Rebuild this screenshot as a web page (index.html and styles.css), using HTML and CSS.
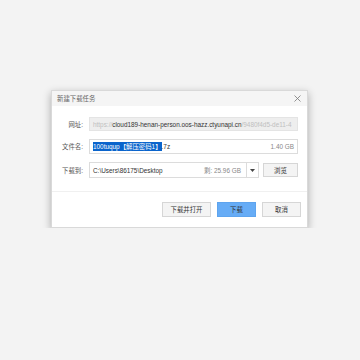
FILE: index.html
```html
<!DOCTYPE html>
<html lang="zh-CN">
<head>
    <meta charset="UTF-8">
    <meta name="viewport" content="width=device-width, initial-scale=1.0">
    <title>新建下载任务</title>
    <link rel="stylesheet" href="styles.css">
</head>
<body>
    <div class="dialog">
        <div class="title">
            <span>新建下载任务</span>
            <svg class="close" width="7" height="7" viewBox="0 0 7 7"><path d="M0.5 0.5L6.5 6.5M6.5 0.5L0.5 6.5" stroke="#777" stroke-width="0.8" fill="none"/></svg>
        </div>
        <div class="body">
            <div class="row">
                <label>网址:</label>
                <div class="field url">
                    <span class="dim">https://</span><span class="host">cloud189-henan-person.oos-hazz.ctyunapi.cn</span><span class="dim">/9480f4d5-de11-4</span>
                </div>
            </div>
            <div class="row">
                <label>文件名:</label>
                <div class="field name">
                    <span class="sel">100tuqup【解压密码1】</span><span>.7z</span>
                    <span class="size">1.40 GB</span>
                </div>
            </div>
            <div class="row">
                <label>下载到:</label>
                <div class="field path">
                    <span class="dir">C:\Users\86175\Desktop</span>
                    <span class="size">剩: 25.96 GB</span>
                    <span class="drop"><svg width="5" height="3" viewBox="0 0 5 3"><path d="M0 0H5L2.5 3Z" fill="#444"/></svg></span>
                </div>
                <button class="btn browse">浏览</button>
            </div>
        </div>
        <div class="footer">
            <button class="btn open">下载并打开</button>
            <button class="btn primary">下载</button>
            <button class="btn">取消</button>
        </div>
    </div>
</body>
</html>
```
FILE: styles.css
```css
* {
    margin: 0;
    padding: 0;
    box-sizing: border-box;
}
body {
    background: #f3f3f3;
    font-family: "Liberation Sans", "Noto Sans CJK SC", sans-serif;
    font-size: 6.4px;
    color: #333;
}
.dialog {
    margin: 90px 0 0 51px;
    width: 257px;
    height: 138px;
    background: #fff;
    border: 1px solid #d9d9d9;
    box-shadow: 0 3px 8px rgba(0, 0, 0, .3);
}
.title {
    display: flex;
    align-items: center;
    justify-content: space-between;
    height: 15px;
    padding: 0 6px 0 5px;
    background: #f5f5f5;
    color: #666;
}
.body {
    padding: 11px 9px 13px 0;
    border-bottom: 1px solid #f0f0f0;
    display: flex;
    flex-direction: column;
    gap: 8px;
}
.row {
    display: flex;
    align-items: center;
}
.row label {
    width: 32px;
    padding-right: 1px;
    text-align: right;
    color: #555;
    margin-right: 5px;
}
.field {
    flex: 1;
    display: flex;
    align-items: center;
    height: 15px;
    padding: 0 3px;
    border: 1px solid #dcdcdc;
    white-space: nowrap;
    overflow: hidden;
}
.url {
    height: 14px;
    background: #eeeeee;
    border-color: #e4e4e4;
}
.url .dim {
    color: #c0c0c0;
}
.url .host {
    color: #333;
}
.sel {
    background: #0a64cc;
    color: #fff;
}
.size {
    margin-left: auto;
    color: #888;
}
.path {
    height: 16px;
    padding-right: 0;
    flex: none;
    width: 170px;
}
.path .size {
    margin-right: 5px;
}
.drop {
    display: flex;
    align-items: center;
    justify-content: center;
    width: 12px;
    height: 100%;
    border-left: 1px solid #dcdcdc;
}
.btn {
    font-family: inherit;
    font-size: 6.4px;
    color: #333;
    height: 15px;
    width: 39px;
    background: #f4f4f4;
    border: 1px solid #d6d6d6;
}
.browse {
    width: 35px;
    height: 14px;
    margin-left: 4px;
}
.footer {
    display: flex;
    justify-content: flex-end;
    gap: 6px;
    padding: 10px 6px 0 0;
}
.open {
    width: 49px;
}
.primary {
    background: #66acf6;
    border-color: #5ea4ee;
}
```
